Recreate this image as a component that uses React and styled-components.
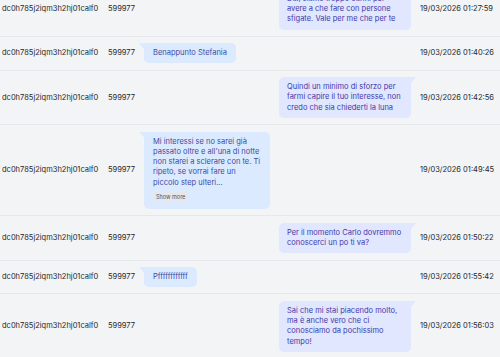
import React from "react";
import styled, { createGlobalStyle } from "styled-components";

const GlobalStyle = createGlobalStyle`
  html, body {
    margin: 0;
    padding: 0;
    background: #f3f4f6;
    overflow: hidden;
  }
  body {
    font-family: Inter, "Noto Sans", sans-serif;
    -webkit-font-smoothing: antialiased;
  }
`;

const messages = [
  {
    id: "dc0h785j2iqm3h2hj01calf0",
    num: "599977",
    side: "sent",
    text: "Dai, siamo troppo carini per avere a che fare con persone sfigate. Vale per me che per te",
    date: "19/03/2026 01:27:59",
  },
  {
    id: "dc0h785j2iqm3h2hj01calf0",
    num: "599977",
    side: "received",
    text: "Benappunto Stefania",
    date: "19/03/2026 01:40:26",
  },
  {
    id: "dc0h785j2iqm3h2hj01calf0",
    num: "599977",
    side: "sent",
    text: "Quindi un minimo di sforzo per farmi capire il tuo interesse, non credo che sia chiederti la luna",
    date: "19/03/2026 01:42:56",
  },
  {
    id: "dc0h785j2iqm3h2hj01calf0",
    num: "599977",
    side: "received",
    text: "Mi interessi se no sarei già passato oltre e all'una di notte non starei a sclerare con te. Ti ripeto, se vorrai fare un piccolo step ulteri...",
    more: true,
    date: "19/03/2026 01:49:45",
  },
  {
    id: "dc0h785j2iqm3h2hj01calf0",
    num: "599977",
    side: "sent",
    text: "Per il momento Carlo dovremmo conoscerci un po ti va?",
    date: "19/03/2026 01:50:22",
  },
  {
    id: "dc0h785j2iqm3h2hj01calf0",
    num: "599977",
    side: "received",
    text: "Pffffffffffff",
    date: "19/03/2026 01:55:42",
  },
  {
    id: "dc0h785j2iqm3h2hj01calf0",
    num: "599977",
    side: "sent",
    text: "Sai che mi stai piacendo molto, ma è anche vero che ci conosciamo da pochissimo tempo!",
    date: "19/03/2026 01:56:03",
  },
];

const App = () => (
  <>
    <GlobalStyle />
    <Table>
      {messages.map((m, i) => (
        <Row key={i}>
          <Cell>{m.id}</Cell>
          <Cell>{m.num}</Cell>
          <MessageCell side={m.side}>
            <Bubble side={m.side}>
              {m.text}
              {m.more && (
                <MoreRow>
                  <ShowMore>Show more</ShowMore>
                </MoreRow>
              )}
            </Bubble>
          </MessageCell>
          <Cell>{m.date}</Cell>
        </Row>
      ))}
    </Table>
  </>
);

const Table = styled.div`
  margin-top: -17.6px;
  display: flex;
  flex-direction: column;
`;

const Row = styled.div`
  display: grid;
  grid-template-columns: 106px 31px 281px 80px;
  align-items: center;
  padding: 6.3px 0 6.3px 2px;
  border-bottom: 1px solid #e5e7eb;
`;

const Cell = styled.div`
  font-size: 7.5px;
  line-height: 10px;
  color: #27272a;
  white-space: nowrap;
`;

const MessageCell = styled.div`
  display: flex;
  justify-content: ${(p) => (p.side === "sent" ? "flex-end" : "flex-start")};
  padding: 0 9px 0 5px;
`;

const Bubble = styled.div`
  position: relative;
  max-width: ${(p) => (p.side === "sent" ? "116px" : "108px")};
  padding: ${(p) => (p.side === "sent" ? "5px 8px" : "5px 9px")};
  border-radius: 5px;
  border-top-left-radius: ${(p) => (p.side === "received" ? "0" : "5px")};
  border-top-right-radius: ${(p) => (p.side === "sent" ? "0" : "5px")};
  background: ${(p) => (p.side === "sent" ? "#e0e7ff" : "#dbeafe")};
  color: ${(p) => (p.side === "sent" ? "#4338a8" : "#3b4aa6")};
  font-size: 7.5px;
  line-height: 10.3px;

  &::before {
    content: "";
    position: absolute;
    top: 0;
    width: 5px;
    height: 6px;
    background: inherit;
    ${(p) =>
      p.side === "sent"
        ? "right: -5px; clip-path: polygon(0 0, 100% 0, 0 100%);"
        : "left: -5px; clip-path: polygon(0 0, 100% 0, 100% 100%);"}
  }
`;

const MoreRow = styled.div`
  display: flex;
  padding: 4px 0 3px;
`;

const ShowMore = styled.span`
  padding: 1.5px 3px;
  border-radius: 2px;
  background: #e5e7eb;
  color: #4b5563;
  font-size: 5.5px;
  line-height: 6px;
`;

export default App;
